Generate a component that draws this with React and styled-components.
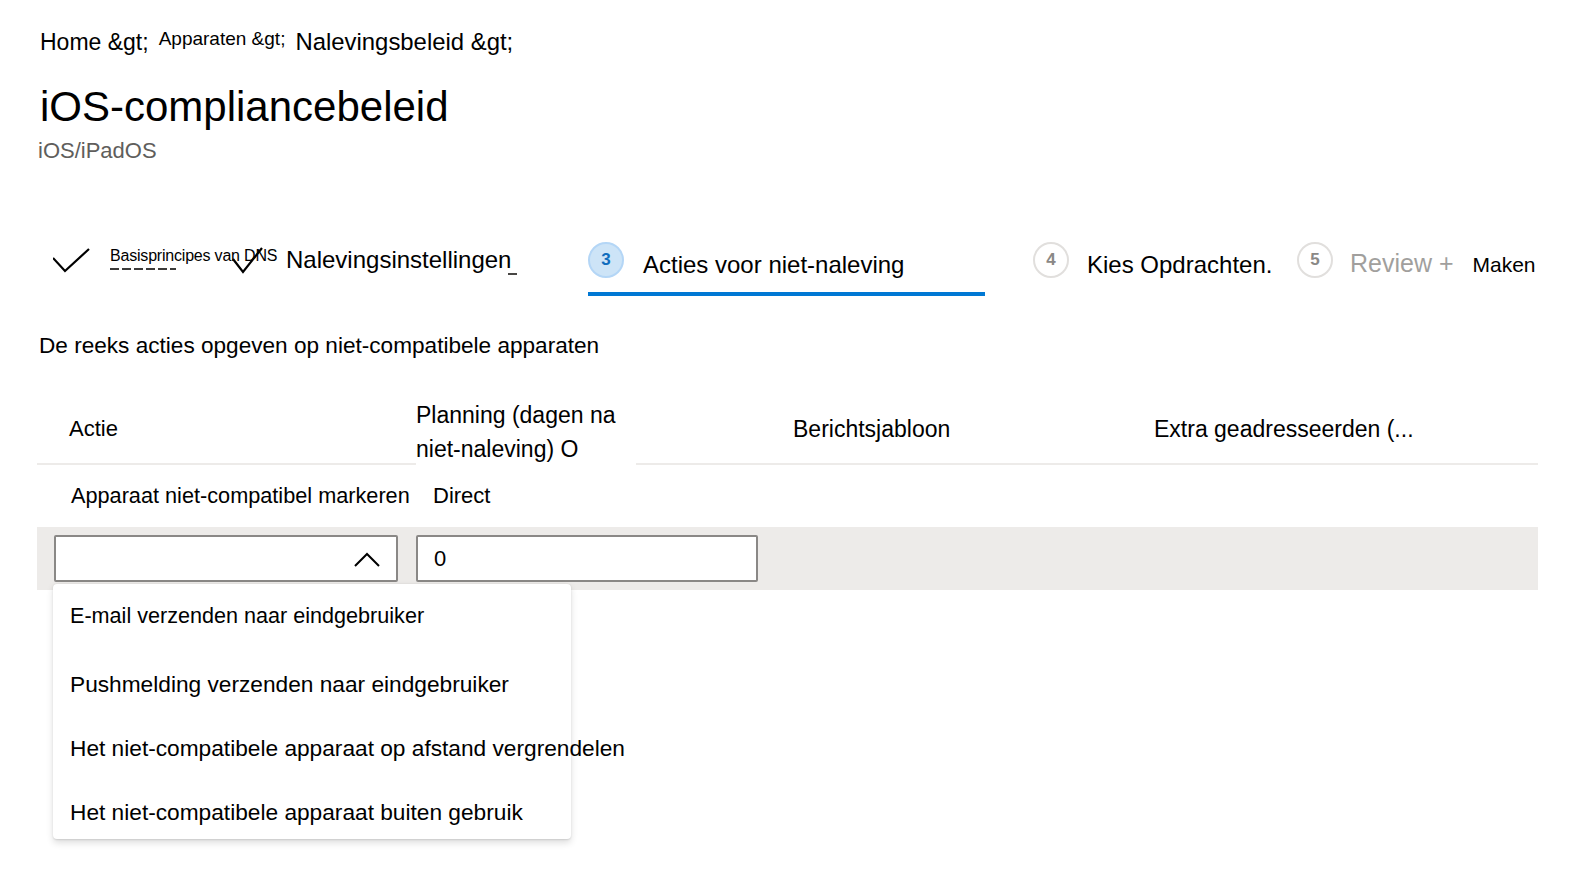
import React from 'react';
import styled, { createGlobalStyle } from 'styled-components';

const GlobalStyle = createGlobalStyle`
  body {
    margin: 0;
    background: #ffffff;
    font-family: "Liberation Sans", Arial, sans-serif;
    color: #000000;
  }
`;

const menuItems = [
  { label: 'E-mail verzenden naar eindgebruiker', size: 21.6 },
  { label: 'Pushmelding verzenden naar eindgebruiker', size: 22.7 },
  { label: 'Het niet-compatibele apparaat op afstand vergrendelen', size: 22.7 },
  { label: 'Het niet-compatibele apparaat buiten gebruik', size: 22.7 },
];

function Check({ width, height, points, top }) {
  return (
    <CheckIcon width={width} height={height} viewBox={`0 0 ${width} ${height}`} $top={top}>
      <polyline points={points} fill="none" stroke="#000" strokeWidth="2.2" />
    </CheckIcon>
  );
}

function ChevronUp() {
  return (
    <svg width="28" height="18" viewBox="0 0 28 18">
      <path d="M2 16 L14 4 L26 16" fill="none" stroke="#000" strokeWidth="2" />
    </svg>
  );
}

function App() {
  return (
    <>
      <GlobalStyle />
      <Page>
        <Breadcrumb>
          <Crumb>{'Home &gt;'}</Crumb>
          <Crumb $small>{'Apparaten &gt;'}</Crumb>
          <Crumb $large>{'Nalevingsbeleid &gt;'}</Crumb>
        </Breadcrumb>
        <Title>iOS-compliancebeleid</Title>
        <Subtitle>iOS/iPadOS</Subtitle>

        <StepsRow>
          <Step $w={179}>
            <Check width={37} height={25} points="0,10 12,23 36,1" top={12} />
            <LabelStack>
              <SmallLabel>Basisprincipes van DNS</SmallLabel>
              <Fragments />
            </LabelStack>
          </Step>
          <Step $w={356}>
            <Check width={31} height={27} points="1,12 11,25 30,1" top={11} />
            <StepLabel $ml={23} $mt={10}>Nalevingsinstellingen</StepLabel>
            <Dash />
          </Step>
          <ActiveStep $w={397}>
            <Circle $active>3</Circle>
            <StepLabel $ml={19} $mt={15}>Acties voor niet-naleving</StepLabel>
          </ActiveStep>
          <Step $w={312} $pl={48}>
            <Circle>4</Circle>
            <StepLabel $ml={18} $mt={15}>Kies Opdrachten.</StepLabel>
          </Step>
          <Step>
            <Circle>5</Circle>
            <ReviewLabel>Review +</ReviewLabel>
            <MakenLabel>Maken</MakenLabel>
          </Step>
        </StepsRow>

        <Description>De reeks acties opgeven op niet-compatibele apparaten</Description>

        <Table>
          <HeaderRow>
            <ActieHead>Actie</ActieHead>
            <PlanningHead>
              Planning (dagen na<br />niet-naleving) O
            </PlanningHead>
            <RestHead>
              <HeadText $w={361}>Berichtsjabloon</HeadText>
              <HeadText>Extra geadresseerden (...</HeadText>
            </RestHead>
          </HeaderRow>
          <BodyRow>
            <BodyCell $w={396} $pl={34} $size={21.7}>Apparaat niet-compatibel markeren</BodyCell>
            <BodyCell>Direct</BodyCell>
          </BodyRow>
          <EditBand>
            <SelectWrap>
              <SelectBox>
                <ChevronUp />
              </SelectBox>
              <Menu>
                {menuItems.map((item) => (
                  <MenuItem key={item.label} $size={item.size}>{item.label}</MenuItem>
                ))}
              </Menu>
            </SelectWrap>
            <InputBox>0</InputBox>
          </EditBand>
        </Table>
      </Page>
    </>
  );
}

const Page = styled.div`
  box-sizing: border-box;
  min-height: 100vh;
  padding: 28px 54px 0 37px;
`;

const Breadcrumb = styled.div`
  display: flex;
  align-items: flex-start;
  gap: 10px;
  margin-left: 3px;
`;

const Crumb = styled.span`
  font-size: ${(props) => (props.$small ? 19 : props.$large ? 23.9 : 23)}px;
  line-height: ${(props) => (props.$small ? 22 : 28)}px;
  white-space: nowrap;
`;

const Title = styled.h1`
  margin: 27px 0 0 3px;
  font-size: 42px;
  font-weight: 400;
  line-height: 48px;
`;

const Subtitle = styled.div`
  margin: 7px 0 0 1px;
  font-size: 22px;
  line-height: 26px;
  color: #605e5c;
`;

const StepsRow = styled.div`
  display: flex;
  align-items: flex-start;
  height: 60px;
  margin-top: 72px;
  padding-left: 16px;
`;

const Step = styled.div`
  display: flex;
  align-items: flex-start;
  flex-shrink: 0;
  box-sizing: border-box;
  width: ${(props) => (props.$w ? `${props.$w}px` : 'auto')};
  padding-left: ${(props) => props.$pl || 0}px;
  height: 60px;
`;

const ActiveStep = styled(Step)`
  border-bottom: 4px solid #0078d4;
`;

const CheckIcon = styled.svg`
  flex-shrink: 0;
  margin-top: ${(props) => props.$top}px;
`;

const LabelStack = styled.div`
  display: flex;
  flex-direction: column;
  margin: 10px 0 0 20px;
`;

const SmallLabel = styled.span`
  font-size: 16px;
  line-height: 19px;
  letter-spacing: -0.2px;
  white-space: nowrap;
`;

/* the cut-off tops of a hidden second line under the first step */
const Fragments = styled.span`
  display: block;
  width: 66px;
  height: 2px;
  margin-top: 3px;
  background: repeating-linear-gradient(
    90deg,
    #3b3a39 0 9px,
    transparent 9px 12px
  );
`;

const StepLabel = styled.span`
  margin: ${(props) => props.$mt}px 0 0 ${(props) => props.$ml}px;
  font-size: 24px;
  line-height: 28px;
  white-space: nowrap;
`;

const Dash = styled.span`
  flex-shrink: 0;
  width: 9px;
  height: 2px;
  margin: 37px 0 0 -3px;
  background: #484644;
`;

const Circle = styled.div`
  flex-shrink: 0;
  box-sizing: border-box;
  width: 36px;
  height: 36px;
  margin-top: 6px;
  border-radius: 50%;
  border: 2px solid ${(props) => (props.$active ? '#b4d6f6' : '#e1dfdd')};
  background: ${(props) => (props.$active ? '#cde4f7' : '#ffffff')};
  display: flex;
  align-items: center;
  justify-content: center;
  font-size: 17px;
  font-weight: 700;
  color: ${(props) => (props.$active ? '#0f6cbd' : '#8a8886')};
`;

const ReviewLabel = styled.span`
  margin: 12px 0 0 17px;
  font-size: 25px;
  line-height: 30px;
  color: #a19f9d;
  white-space: nowrap;
`;

const MakenLabel = styled.span`
  margin: 16px 0 0 19px;
  font-size: 21px;
  line-height: 25px;
  white-space: nowrap;
`;

const Description = styled.p`
  margin: 37px 0 0 2px;
  font-size: 22.6px;
  line-height: 26px;
`;

const Table = styled.div`
  margin-top: 39px;
  font-size: 22px;
`;

const HeaderRow = styled.div`
  display: flex;
  height: 67px;
  font-size: 23px;
`;

const ActieHead = styled.div`
  box-sizing: border-box;
  width: 379px;
  padding: 0 0 4px 32px;
  border-bottom: 2px solid #edebe9;
  display: flex;
  align-items: center;
  font-size: 22px;
`;

const PlanningHead = styled.div`
  width: 220px;
  line-height: 34px;
  white-space: nowrap;
`;

const RestHead = styled.div`
  flex: 1;
  box-sizing: border-box;
  padding: 0 0 2px 157px;
  border-bottom: 2px solid #edebe9;
  display: flex;
  align-items: center;
`;

const HeadText = styled.span`
  width: ${(props) => (props.$w ? `${props.$w}px` : 'auto')};
  flex-shrink: 0;
  white-space: nowrap;
`;

const BodyRow = styled.div`
  display: flex;
  align-items: center;
  height: 62px;
`;

const BodyCell = styled.div`
  box-sizing: border-box;
  width: ${(props) => (props.$w ? `${props.$w}px` : 'auto')};
  padding-left: ${(props) => props.$pl || 0}px;
  font-size: ${(props) => props.$size || 22}px;
  white-space: nowrap;
`;

const EditBand = styled.div`
  display: flex;
  align-items: center;
  gap: 18px;
  height: 63px;
  padding-left: 17px;
  background: #edebe9;
`;

const SelectWrap = styled.div`
  position: relative;
  width: 344px;
  height: 47px;
`;

const SelectBox = styled.div`
  box-sizing: border-box;
  width: 100%;
  height: 100%;
  padding-right: 15px;
  border: 2px solid #8a8886;
  border-radius: 2px;
  background: #ffffff;
  display: flex;
  align-items: center;
  justify-content: flex-end;
`;

const InputBox = styled.div`
  box-sizing: border-box;
  width: 342px;
  height: 47px;
  padding-left: 16px;
  border: 2px solid #8a8886;
  border-radius: 2px;
  background: #ffffff;
  display: flex;
  align-items: center;
`;

const Menu = styled.div`
  position: absolute;
  top: calc(100% + 2px);
  left: -1px;
  z-index: 2;
  width: 518px;
  height: 255px;
  background: #ffffff;
  border-radius: 4px;
  box-shadow: 0 3.2px 7.2px rgba(0, 0, 0, 0.13), 0 0.6px 1.8px rgba(0, 0, 0, 0.11);
`;

const MenuItem = styled.div`
  height: 64px;
  padding-left: 17px;
  display: flex;
  align-items: center;
  font-size: ${(props) => props.$size}px;
  white-space: nowrap;

  &:first-child {
    margin-bottom: 4px;
  }
`;

export default App;
